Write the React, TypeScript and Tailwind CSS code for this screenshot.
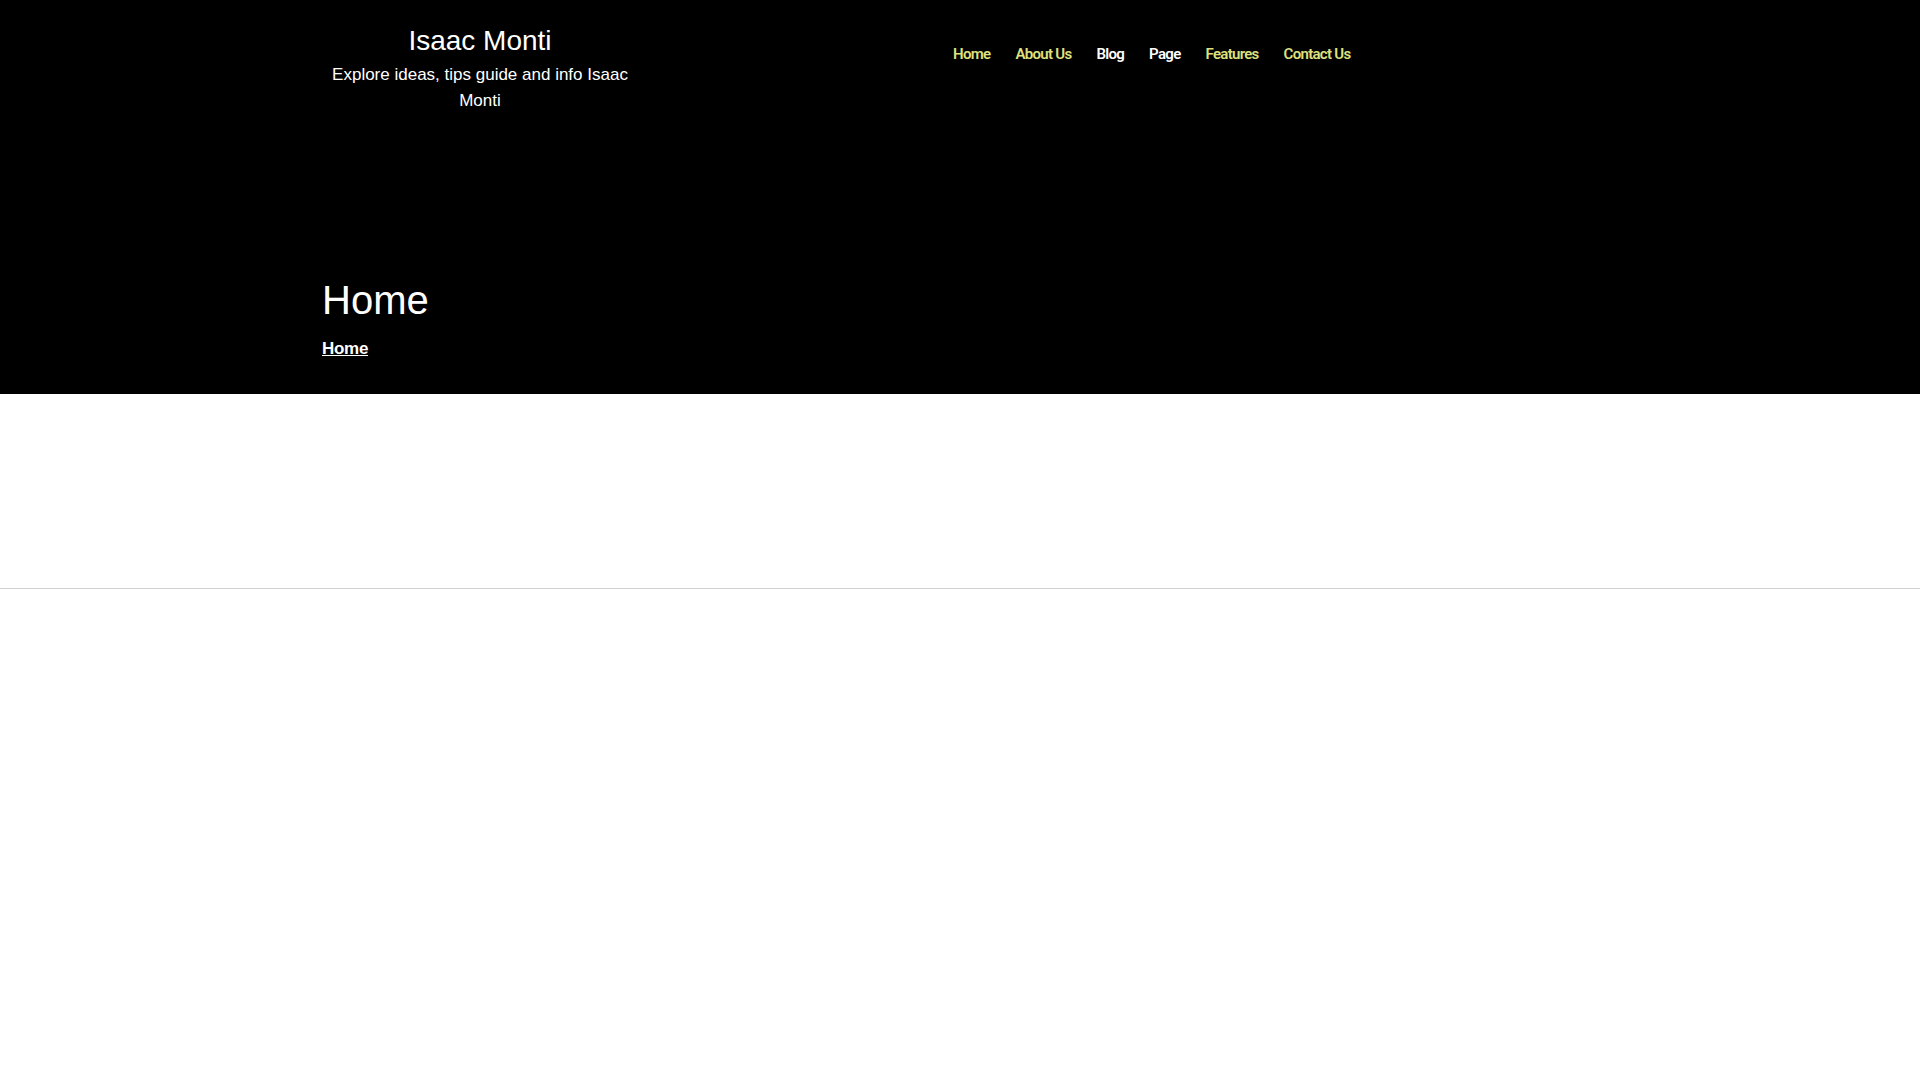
import React from "react";

const navItems = [
  { label: "Home", yellow: true },
  { label: "About Us", yellow: true },
  { label: "Blog", yellow: false },
  { label: "Page", yellow: false },
  { label: "Features", yellow: true },
  { label: "Contact Us", yellow: true },
];

export default function App() {
  return (
    <div className="min-h-screen bg-white font-['Liberation_Sans',Arial,sans-serif]">
      <div className="bg-black text-white">
        <div className="w-[1280px] mx-auto pt-[25px] pb-[33px]">
          <header className="flex items-start">
            <div className="w-[320px] text-center">
              <div className="text-[28px] leading-[32px]">Isaac Monti</div>
              <p className="mt-[5px] text-[17px] leading-[26px] px-[10px]">
                Explore ideas, tips guide and info Isaac Monti
              </p>
            </div>
            <nav className="ml-[313px] mt-[19px] flex gap-[25px] font-['Roboto',sans-serif] font-semibold text-[15px] leading-[20px] tracking-[-0.7px]">
              {navItems.map((n) => (
                <a
                  key={n.label}
                  href="#"
                  className={n.yellow ? "text-[#dfe17f]" : "text-white"}
                >
                  {n.label}
                </a>
              ))}
            </nav>
          </header>
          <div className="mt-[162px] pl-[2px]">
            <h1 className="text-[40px] leading-[48px]">Home</h1>
            <div className="mt-[13px] text-[17px] leading-[24px] font-bold tracking-[-0.3px]">
              <a href="#" className="underline">Home</a>
            </div>
          </div>
        </div>
      </div>
      <div className="h-[194px]" />
      <div className="h-px bg-[#d0d0d0]" />
    </div>
  );
}
